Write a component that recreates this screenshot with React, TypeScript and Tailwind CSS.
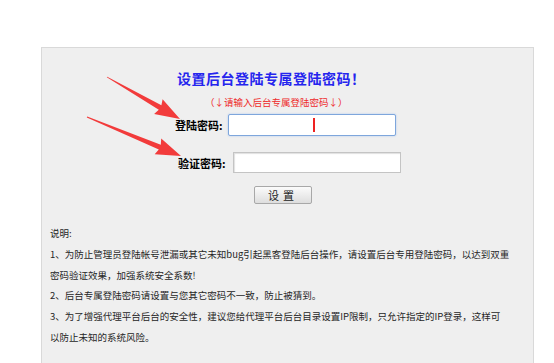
import React from "react"

type Pt = [number, number]

function arrowPoints(tail: Pt, tip: Pt, headLen = 23, headHalf = 8.5, shaftHalf = 2.6) {
  const dx = tip[0] - tail[0]
  const dy = tip[1] - tail[1]
  const len = Math.hypot(dx, dy)
  const ux = dx / len
  const uy = dy / len
  const nx = -uy
  const ny = ux
  const bx = tip[0] - ux * headLen
  const by = tip[1] - uy * headLen
  const pts: Pt[] = [
    [tail[0] + nx * 0.4, tail[1] + ny * 0.4],
    [bx + nx * shaftHalf, by + ny * shaftHalf],
    [bx - ux * 2 + nx * headHalf, by - uy * 2 + ny * headHalf],
    tip,
    [bx - ux * 2 - nx * headHalf, by - uy * 2 - ny * headHalf],
    [bx - nx * shaftHalf, by - ny * shaftHalf],
    [tail[0] - nx * 0.4, tail[1] - ny * 0.4],
  ]
  return pts.map((p) => `${p[0].toFixed(1)},${p[1].toFixed(1)}`).join(" ")
}

export default function App() {
  return (
    <div
      className="relative h-[363px] w-[554px] overflow-hidden bg-white pl-[41px] pt-[47px]"
      style={{ fontFamily: '"Noto Sans CJK SC", "Noto Sans", sans-serif' }}
    >
      {/* Panel */}
      <div className="flex h-[330px] w-[493px] flex-col border border-[#d9d9d9] bg-[#efefef]">
        {/* Title */}
        <div className="ml-[135px] mt-[20px] text-[14px] font-bold leading-[20px] tracking-[0.5px] text-[#2525ee]">
          设置后台登陆专属登陆密码！
        </div>
        <div className="ml-[163px] mt-[7px] text-[9.5px] leading-[14px] text-[#ee2b2b]">
          （↓请输入后台专属登陆密码↓）
        </div>

        {/* Password row */}
        <div className="ml-[133px] mt-[5px] flex items-center">
          <span className="w-[48px] text-[11px] font-bold leading-[14px] text-black">登陆密码:</span>
          <div className="relative ml-[5px] h-[22px] w-[168px] rounded-[2px] border border-[#7ea6dc] bg-white shadow-[0_0_2px_#a9c5ee]">
            <div className="absolute left-[84px] top-[3px] h-[14px] w-[1.5px] bg-[#e22]" />
          </div>
        </div>

        {/* Confirm row */}
        <div className="ml-[136px] mt-[16px] flex items-center">
          <span className="w-[48px] text-[11px] font-bold leading-[14px] text-black">验证密码:</span>
          <div className="ml-[7px] h-[21px] w-[168px] border border-[#c4c4c4] bg-white shadow-[inset_1px_1px_1px_#e0e0e0]" />
        </div>

        {/* Button */}
        <button className="ml-[212px] mt-[13px] h-[18px] w-[58px] rounded-[2px] border border-[#a8a8a8] bg-gradient-to-b from-[#fbfbfb] to-[#dedede] text-[11px] leading-[16px] tracking-[4px] text-[#222]">
          设置
        </button>

        {/* Notes */}
        <div className="ml-[8px] mt-[19px] whitespace-nowrap text-[9.5px] leading-[20.8px] text-[#262626]">
          <div>说明:</div>
          <div>
            1、为防止管理员登陆帐号泄漏或其它未知bug引起黑客登陆后台操作，请设置后台专用登陆密码，以达到双重
            <br />
            密码验证效果，加强系统安全系数!
          </div>
          <div>2、后台专属登陆密码请设置与您其它密码不一致，防止被猜到。</div>
          <div>
            3、为了增强代理平台后台的安全性，建议您给代理平台后台目录设置IP限制，只允许指定的IP登录，这样可
            <br />
            以防止未知的系统风险。
          </div>
        </div>
      </div>

      {/* Annotation arrows */}
      <svg className="pointer-events-none absolute left-0 top-0" width="554" height="363">
        <polygon points={arrowPoints([107, 77], [180, 119])} fill="#f23b3b" />
        <polygon points={arrowPoints([87, 117], [181, 156])} fill="#f23b3b" />
      </svg>
    </div>
  )
}
